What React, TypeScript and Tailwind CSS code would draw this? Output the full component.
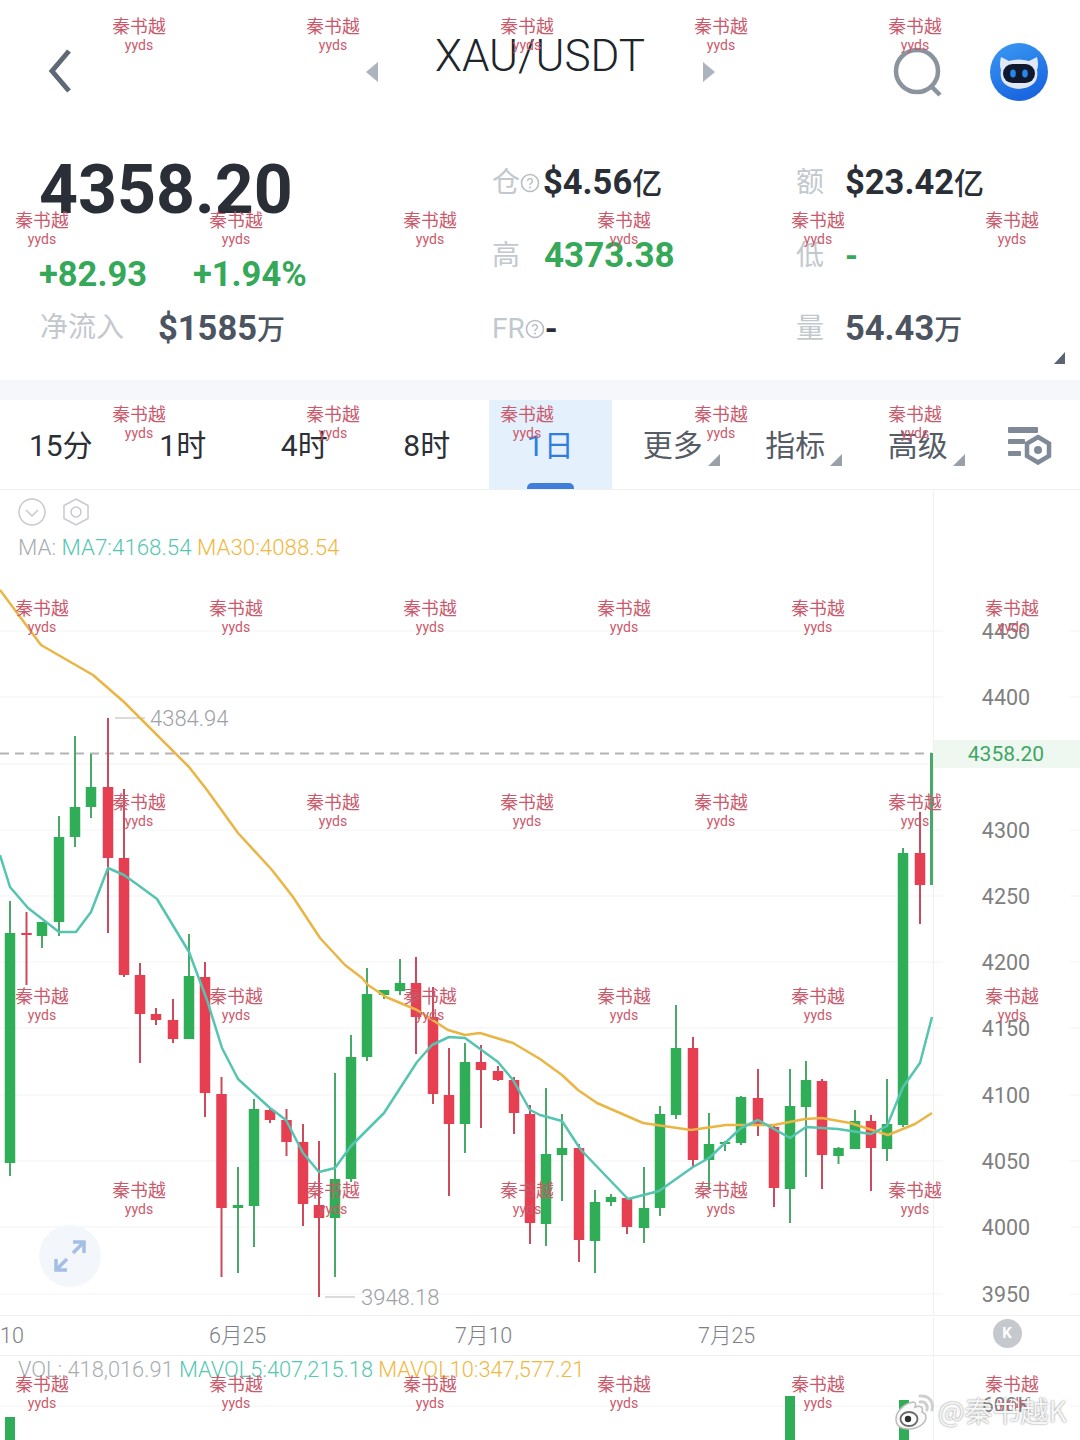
import React from "react";

type C = [number, number, number, number, number, number];
// x, hi, top, bottom, low, isGreen(1)/red(0)
const candles: C[] = [
  [10, 901, 933, 1163, 1176, 1],
  [26.5, 912, 933, 935, 985, 0],
  [42, 922, 922, 936, 948, 1],
  [59, 816, 837, 922, 936, 1],
  [75, 736, 807, 837, 847, 1],
  [91, 754, 787, 807, 818, 1],
  [108, 718, 787, 858, 933, 0],
  [124, 789, 858, 975, 977, 0],
  [140, 963, 975, 1014, 1063, 0],
  [156, 1008, 1014, 1020, 1025, 0],
  [173, 999, 1020, 1039, 1043, 0],
  [189, 934, 976, 1039, 1039, 1],
  [205, 962, 977, 1093, 1117, 0],
  [221.5, 1077, 1094, 1208, 1277, 0],
  [238, 1167, 1205, 1208, 1273, 1],
  [254, 1099, 1109, 1206, 1247, 1],
  [270, 1109, 1110, 1120, 1123, 0],
  [286.5, 1109, 1120, 1142, 1156, 0],
  [303, 1124, 1142, 1204, 1226, 0],
  [319, 1141, 1205, 1218, 1297, 0],
  [335, 1073, 1179, 1218, 1277, 1],
  [351, 1035, 1057, 1179, 1182, 1],
  [367, 968, 994, 1057, 1061, 1],
  [384, 990, 990, 995, 999, 1],
  [400, 959, 983, 991, 995, 1],
  [416, 957, 983, 1017, 1054, 0],
  [433, 987, 1017, 1094, 1104, 0],
  [449, 1048, 1095, 1124, 1196, 0],
  [465, 1043, 1062, 1124, 1153, 1],
  [481, 1045, 1062, 1070, 1128, 0],
  [498, 1066, 1071, 1080, 1081, 0],
  [514, 1077, 1080, 1113, 1134, 0],
  [530, 1105, 1114, 1223, 1244, 0],
  [546, 1088, 1154, 1224, 1246, 1],
  [562, 1114, 1148, 1155, 1201, 1],
  [579, 1144, 1148, 1240, 1262, 0],
  [595, 1190, 1202, 1241, 1273, 1],
  [611, 1194, 1197, 1202, 1206, 1],
  [627, 1197, 1198, 1227, 1234, 0],
  [644, 1167, 1208, 1228, 1243, 1],
  [660, 1106, 1114, 1208, 1216, 1],
  [676, 1005, 1048, 1115, 1119, 1],
  [693, 1037, 1048, 1160, 1167, 0],
  [709, 1113, 1144, 1160, 1190, 1],
  [725, 1141, 1142, 1144, 1151, 1],
  [741, 1096, 1097, 1143, 1145, 1],
  [758, 1069, 1098, 1125, 1136, 0],
  [774, 1126, 1127, 1188, 1207, 0],
  [790, 1069, 1106, 1189, 1223, 1],
  [806, 1061, 1080, 1107, 1177, 1],
  [822, 1079, 1081, 1155, 1189, 0],
  [838.5, 1147, 1148, 1156, 1164, 1],
  [855, 1110, 1121, 1149, 1149, 1],
  [871, 1115, 1121, 1148, 1191, 0],
  [887, 1079, 1124, 1149, 1161, 1],
  [903, 848, 853, 1125, 1127, 1],
  [920, 812, 853, 885, 924, 0],
];

const ma30 =
  "0,590 41,645 93,675 124,702 189,767 207,790 238,833 272,870 293,897 320,938 345,965 362,978 368,985 386,997 417,1010 448,1030 465,1035 480,1033 513,1043 540,1059 562,1075 578,1090 597,1103 643,1123 691,1130 726,1125 774,1125 805,1119 822,1118 850,1123 888,1135 915,1124 932,1113";
const ma7 =
  "0,855 10,887 28,908 59,932 76,932 91,912 108,868 124,875 138,885 157,899 189,952 207,1000 222,1048 238,1079 270,1108 286,1120 303,1153 319,1172 335,1168 351,1146 384,1113 417,1062 432,1045 449,1037 465,1038 498,1062 513,1080 530,1110 540,1115 562,1121 581,1150 628,1199 659,1191 693,1167 709,1158 741,1128 758,1120 790,1138 806,1127 838,1129 871,1134 887,1126 903,1087 920,1063 932,1017";

const gridYs = [631, 697, 764, 830, 896, 962, 1028, 1095, 1161, 1227, 1294];
const axis: [string, number][] = [
  ["4450", 632],
  ["4400", 698],
  ["4300", 831],
  ["4250", 897],
  ["4200", 963],
  ["4150", 1029],
  ["4100", 1096],
  ["4050", 1162],
  ["4000", 1228],
  ["3950", 1295],
];

const marks: { x: number; y: number }[] = [];
for (let r = 0; r < 8; r++) {
  const odd = r % 2 === 1;
  const xs = odd ? [42, 236, 430, 624, 818, 1012] : [139, 333, 527, 721, 915];
  xs.forEach((x) => marks.push({ x, y: 26 + r * 194 }));
}

const sans = "font-['Roboto','Noto_Sans_CJK_SC',sans-serif]";

function Label({ children }: { children: React.ReactNode }) {
  return <span className="text-[28px] leading-none text-[#c3c8ce]">{children}</span>;
}

function Help() {
  return (
    <svg width="20" height="20" viewBox="0 0 20 20" className="shrink-0">
      <circle cx="10" cy="10" r="8.5" fill="none" stroke="#b8bdc4" strokeWidth="1.6" />
      <path d="M7.6 8a2.4 2.4 0 1 1 3.6 2.1c-.8.5-1.2.9-1.2 1.8" fill="none" stroke="#b8bdc4" strokeWidth="1.5" />
      <circle cx="10" cy="14.6" r="1" fill="#b8bdc4" />
    </svg>
  );
}

function Corner() {
  return <span className="absolute right-[-17px] bottom-[-5px] h-0 w-0 border-b-[12px] border-l-[12px] border-b-[#9aa0a8] border-l-transparent" />;
}

function Tab({ t, more, active, first, nudge }: { t: string; more?: boolean; active?: boolean; first?: boolean; nudge?: boolean }) {
  return (
    <div
      className={`relative flex h-full items-center justify-center pt-[3px] ${first ? "w-[121.5px]" : "w-[122.5px]"} ${nudge ? "pr-[2px]" : ""} ${active ? "bg-[#e5f0fd]" : ""}`}
    >
      <span className={`relative text-[30px] leading-none ${active ? "text-[#2f7de0]" : more ? "text-[#555c66]" : "text-[#2b2f36]"}`}>
        {t}
        {more && <Corner />}
      </span>
      {active && <span className="absolute bottom-0 left-[38px] h-[6px] w-[47px] rounded-t-[5px] bg-[#3f7fdb]" />}
    </div>
  );
}

export default function App() {
  return (
    <div className={`relative h-[1440px] w-[1080px] overflow-hidden bg-white ${sans}`}>
      {/* header */}
      <header className="flex h-[130px] items-start">
        <svg width="24" height="44" viewBox="0 0 24 44" className="ml-[48px] mt-[49px] shrink-0">
          <path d="M21 2 L4 22 L21 42" fill="none" stroke="#5f6875" strokeWidth="5" />
        </svg>
        <span className="ml-[294px] mt-[62px] h-0 w-0 border-y-[10px] border-r-[12px] border-y-transparent border-r-[#adb4bd]" />
        <h1 className="ml-[57px] mt-[29px] w-[207px] whitespace-nowrap text-[44px] font-light leading-[54px] text-[#20242b]">XAU/USDT</h1>
        <span className="ml-[61px] mt-[62px] h-0 w-0 border-y-[10px] border-l-[12px] border-y-transparent border-l-[#adb4bd]" />
        <svg width="50" height="50" viewBox="0 0 50 50" className="ml-[178px] mt-[47px] shrink-0">
          <circle cx="24" cy="24" r="21" fill="none" stroke="#8a939e" strokeWidth="4.5" />
          <path d="M38 39 L47 48" stroke="#8a939e" strokeWidth="4.5" />
        </svg>
        <svg width="58" height="58" viewBox="0 0 58 58" className="ml-[47px] mt-[43px] shrink-0">
          <defs>
            <linearGradient id="av" x1="0" y1="0" x2="0.4" y2="1">
              <stop offset="0" stopColor="#3b9bf3" />
              <stop offset="1" stopColor="#1a66e0" />
            </linearGradient>
          </defs>
          <circle cx="29" cy="29" r="29" fill="url(#av)" />
          <path d="M11 14 L19 18 Q29 15 39 18 L47 14 Q49 22 47 27 Q50 44 29 46 Q8 44 11 27 Q9 22 11 14Z" fill="#dfe8f4" />
          <rect x="13" y="21" width="32" height="19" rx="9.5" fill="#10192d" />
          <ellipse cx="23" cy="30.5" rx="2.8" ry="4" fill="#2a86ee" />
          <ellipse cx="35" cy="30.5" rx="2.8" ry="4" fill="#2a86ee" />
        </svg>
      </header>

      {/* stats */}
      <section className="relative flex h-[250px] pt-[16px]">
        <div className="w-[492px] pl-[39px] pt-[2px]">
          <div className="flex h-[84px] items-center text-[68px] font-bold leading-none text-[#2a2e36]">4358.20</div>
          <div className="mt-[20px] flex h-[44px] items-center text-[34.5px] font-bold leading-none text-[#35a85a]">
            <span>+82.93</span>
            <span className="ml-[46px]">+1.94%</span>
          </div>
          <div className="flex h-[64px] items-center pl-[1px]">
            <Label>净流入</Label>
            <span className="ml-[34px] text-[34.5px] font-bold leading-none text-[#4c5461]">
              $1585<span className="text-[28px] font-medium">万</span>
            </span>
          </div>
        </div>
        <div className="w-[304px]">
          <div className="flex h-[73px] items-center">
            <Label>仓</Label>
            <Help />
            <span className="ml-[3px] text-[34.5px] font-bold leading-none text-[#2a2e36]">
              $4.56<span className="text-[30px] font-medium">亿</span>
            </span>
          </div>
          <div className="flex h-[73px] items-center">
            <Label>高</Label>
            <span className="ml-[24px] text-[35px] font-bold leading-none text-[#35a85a]">4373.38</span>
          </div>
          <div className="flex h-[73px] items-center">
            <Label>FR</Label>
            <Help />
            <span className="text-[33px] font-bold leading-none text-[#2a2e36]">-</span>
          </div>
        </div>
        <div className="flex-1">
          <div className="flex h-[73px] items-center">
            <Label>额</Label>
            <span className="ml-[21px] text-[34.5px] font-bold leading-none text-[#2a2e36]">
              $23.42<span className="text-[30px] font-medium">亿</span>
            </span>
          </div>
          <div className="flex h-[73px] items-center">
            <Label>低</Label>
            <span className="ml-[21px] text-[33px] font-bold leading-none text-[#35a85a]">-</span>
          </div>
          <div className="flex h-[73px] items-center">
            <Label>量</Label>
            <span className="ml-[21px] text-[34.5px] font-bold leading-none text-[#4c5461]">
              54.43<span className="text-[28px] font-medium">万</span>
            </span>
          </div>
        </div>
        <span className="absolute bottom-[16px] right-[15px] h-0 w-0 border-b-[12px] border-l-[11px] border-b-[#5a6473] border-l-transparent" />
      </section>

      <div className="h-[20px] bg-[#f5f7fa]" />

      {/* tabs */}
      <nav className="flex h-[90px] items-center border-b border-[#eef0f2]">
        <Tab t="15分" first />
        <Tab t="1时" />
        <Tab t="4时" nudge />
        <Tab t="8时" nudge />
        <Tab t="1日" active />
        <Tab t="更多" more />
        <Tab t="指标" more />
        <Tab t="高级" more />
        <svg width="46" height="40" viewBox="0 0 46 40" className="ml-[27px] shrink-0">
          <rect x="2" y="2" width="30" height="6" rx="1" fill="#7f8997" />
          <rect x="2" y="14" width="17" height="5" rx="1" fill="#7f8997" />
          <rect x="2" y="26" width="13" height="5" rx="1" fill="#7f8997" />
          <path d="M32 12 L43 18.5 L43 31 L32 37.5 L21 31 L21 18.5Z" fill="none" stroke="#7f8997" strokeWidth="4.5" />
          <circle cx="32" cy="25" r="4" fill="#7f8997" />
        </svg>
      </nav>

      {/* chart */}
      <section>
        <div className="h-[80px] w-[934px] border-r border-[#eef0f2] pl-[18px] pt-[8px]">
          <div className="flex h-[28px] items-center gap-[16px]">
            <svg width="28" height="28" viewBox="0 0 28 28">
              <circle cx="14" cy="14" r="13" fill="none" stroke="#c6cacf" strokeWidth="1.5" />
              <path d="M8 12 L14 18 L20 12" fill="none" stroke="#c6cacf" strokeWidth="1.5" />
            </svg>
            <svg width="28" height="28" viewBox="0 0 28 28">
              <path d="M14 1 L26 7.5 L26 20.5 L14 27 L2 20.5 L2 7.5Z" fill="none" stroke="#c6cacf" strokeWidth="1.5" />
              <circle cx="14" cy="14" r="5" fill="none" stroke="#c6cacf" strokeWidth="1.5" />
            </svg>
          </div>
          <div className="mt-[7px] whitespace-nowrap text-[22.3px] font-light leading-[28px]">
            <span className="text-[#a9adb2]">MA: </span>
            <span className="text-[#55c7b2]">MA7:4168.54 </span>
            <span className="text-[#f0b840]">MA30:4088.54</span>
          </div>
        </div>

        <div className="relative h-[745px]">
          <svg width="1080" height="745" viewBox="0 570 1080 745" className="block">
            {gridYs.map((y) => (
              <g key={y} stroke="#f2f3f5" strokeWidth="1">
                <line x1="0" x2="943" y1={y} y2={y} />
                <line x1="1070" x2="1080" y1={y} y2={y} />
              </g>
            ))}
            <line x1="933.5" x2="933.5" y1="570" y2="1315" stroke="#eef0f2" />
            <line x1="0" x2="932" y1="753.5" y2="753.5" stroke="#b4b4b4" strokeWidth="2" strokeDasharray="9 6" />
            <rect x="934" y="740" width="146" height="28" fill="#eef8f1" />
            <line x1="115" x2="145" y1="718" y2="718" stroke="#cfcfcf" strokeWidth="1.5" />
            <line x1="325" x2="355" y1="1297" y2="1297" stroke="#cfcfcf" strokeWidth="1.5" />
            {candles.map(([x, hi, top, bot, low, g]) => (
              <g key={x}>
                <line x1={x} x2={x} y1={hi} y2={low} stroke={g ? "#4aa868" : "#cb4a5c"} strokeWidth="2" />
                <rect x={x - 5.25} y={top} width="10.5" height={Math.max(bot - top, 2)} fill={g ? "#30ae57" : "#e63f52"} />
              </g>
            ))}
            <rect x="930" y="753" width="3" height="132" fill="#4aa868" />
            <polyline points={ma30} fill="none" stroke="#ebb544" strokeWidth="2.5" strokeLinejoin="round" />
            <polyline points={ma7} fill="none" stroke="#55c4b0" strokeWidth="2.5" strokeLinejoin="round" />
          </svg>
          {axis.map(([t, y]) => (
            <span
              key={t}
              className="absolute left-[934px] w-[144px] -translate-y-1/2 text-center text-[21.5px] leading-none text-[#808080]"
              style={{ top: y - 570 }}
            >
              {t}
            </span>
          ))}
          <span className="absolute left-[934px] top-[172px] w-[144px] text-center text-[21px] leading-[24px] text-[#3fa763]">4358.20</span>
          <span className="absolute left-[150px] top-[137px] text-[22px] font-light leading-[24px] text-[#9ea1a5]">4384.94</span>
          <span className="absolute left-[361px] top-[716px] text-[22px] font-light leading-[24px] text-[#9ea1a5]">3948.18</span>
          <div className="absolute left-[39px] top-[655px] flex h-[62px] w-[62px] items-center justify-center rounded-full bg-[#f3f6fb]">
            <svg width="34" height="34" viewBox="0 0 34 34" fill="none" stroke="#a4bfe4" strokeWidth="3.5">
              <path d="M20 14 L31 3 M20 3 H31 V14" />
              <path d="M14 20 L3 31 M3 20 V31 H14" />
            </svg>
          </div>
        </div>

        {/* date axis */}
        <div className="flex h-[41px] items-center border-y border-[#eef0f2] pt-[2px] text-[21.5px] font-light text-[#7d8187]">
          <span className="w-[209px]">10</span>
          <span className="w-[246px]">6月25</span>
          <span className="w-[243px]">7月10</span>
          <span className="w-[235px]">7月25</span>
          <div className="flex h-full flex-1 items-center justify-center border-l border-[#eef0f2]">
            <span className="mt-[-6px] flex h-[29px] w-[29px] items-center justify-center rounded-full bg-[#c5c8cd] text-[15px] font-bold text-white">K</span>
          </div>
        </div>

        {/* volume */}
        <div className="relative h-[85px]">
          <div className="flex h-full w-[934px] items-start border-r border-[#eef0f2] pl-[18px] text-[21.8px] font-light leading-[28px]">
            <span className="whitespace-nowrap">
              <span className="text-[#a9adb2]">VOL: 418,016.91 </span>
              <span className="text-[#55c7b2]">MAVOL5:407,215.18 </span>
              <span className="text-[#f0b840]">MAVOL10:347,577.21</span>
            </span>
          </div>
          <svg width="1080" height="85" viewBox="0 1355 1080 85" className="absolute inset-0">
            <line x1="0" x2="943" y1="1405" y2="1405" stroke="#f2f3f5" />
            <line x1="1070" x2="1080" y1="1405" y2="1405" stroke="#f2f3f5" />
            <rect x="5" y="1416" width="10" height="24" fill="#30ae57" />
            <rect x="785" y="1395" width="10" height="45" fill="#30ae57" />
            <rect x="899" y="1399" width="10" height="41" fill="#30ae57" />
          </svg>
          <span className="absolute left-[982px] top-[37px] text-[21px] leading-[24px] text-[#808080]">600K</span>
        </div>
      </section>

      {/* repeating watermark */}
      <div className="pointer-events-none absolute inset-0 font-['Noto_Sans_CJK_SC','Noto_Sans',sans-serif]">
        {marks.map((m) => (
          <div
            key={`${m.x}-${m.y}`}
            className="absolute flex w-[80px] -translate-x-1/2 flex-col items-center text-[#c95a6c]"
            style={{ left: m.x, top: m.y - 12 }}
          >
            <span className="text-[17.8px] leading-[22px]">秦书越</span>
            <span className="font-['Roboto',sans-serif] text-[14px] leading-[18px]">yyds</span>
          </div>
        ))}
      </div>

      {/* weibo mark */}
      <div className="pointer-events-none absolute left-[894px] top-[1393px] flex items-center">
        <svg width="42" height="38" viewBox="0 0 42 38" fill="none">
          <path d="M2 26c0-8 9-16 17-17 3 0 3 3 2 5 5-2 9 0 7 5 3 1 4 3 4 5 0 7-9 12-17 12S2 33 2 26Z" fill="#fafafa" stroke="#bdbdbd" strokeWidth="1.5" />
          <ellipse cx="15" cy="26" rx="8.5" ry="7" fill="#fff" stroke="#6b6b6b" strokeWidth="1.8" />
          <circle cx="14" cy="26" r="3.2" fill="#2e2e2e" />
          <path d="M26 9c5-1 8 3 7 8M26 3c9-1 14 6 12 14" stroke="#cfcfcf" strokeWidth="3" strokeLinecap="round" />
        </svg>
        <span className="ml-[2px] mt-[-4px] whitespace-nowrap font-['Noto_Sans_CJK_SC',sans-serif] text-[28px] leading-none text-[#f6f6f6] [text-shadow:0_0_2px_#777]">
          @秦书越K
        </span>
      </div>
    </div>
  );
}
